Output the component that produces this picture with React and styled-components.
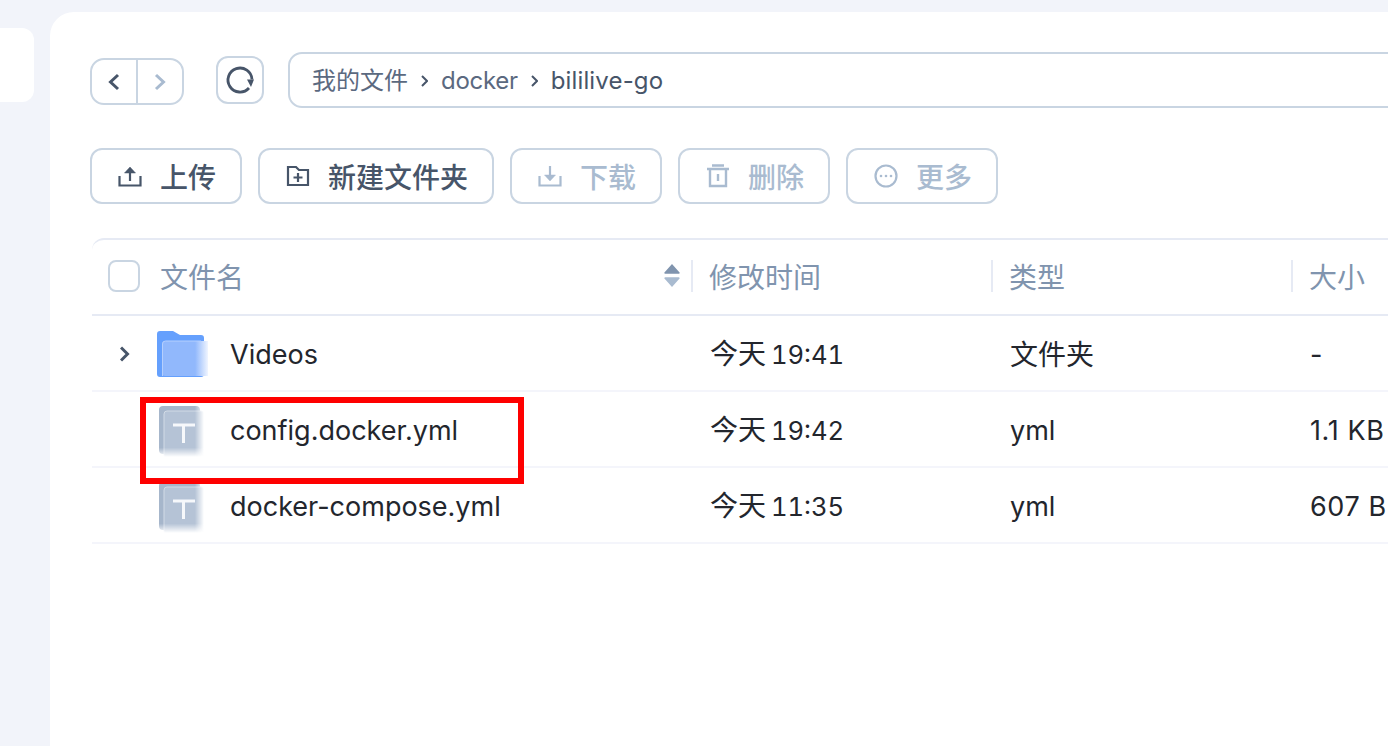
import styled, { createGlobalStyle } from "styled-components"

const GlobalStyle = createGlobalStyle`
	html, body {
		margin: 0;
		height: 100%;
		overflow: hidden;
		background: #f2f4fa;
	}
	* {
		box-sizing: border-box;
	}
`

const Page = styled.div`
	width: 1388px;
	height: 746px;
	overflow: hidden;
	position: relative;
	display: flex;
	align-items: flex-start;
	gap: 16px;
	padding-top: 12px;
	font-family: Inter, "Noto Sans CJK SC", sans-serif;
`

const SideCard = styled.div`
	width: 34px;
	height: 74px;
	margin-top: 16px;
	flex: none;
	background: #fff;
	border-radius: 0 12px 12px 0;
`

const Panel = styled.main`
	flex: none;
	width: 1500px;
	height: 760px;
	background: #fff;
	border-radius: 24px 0 0 0;
	padding: 40px 0 0 40px;
`

const TopBar = styled.div`
	display: flex;
	align-items: flex-start;
	height: 56px;
`

const NavGroup = styled.div`
	display: flex;
	width: 94px;
	height: 47px;
	margin-top: 6px;
	border: 2px solid #c9d5e2;
	border-radius: 14px;
`

const NavBtn = styled.div`
	flex: 1;
	display: flex;
	align-items: center;
	justify-content: center;
	color: ${(props) => (props.$off ? "#a9bbd0" : "#475569")};
	& + & {
		border-left: 2px solid #c9d5e2;
	}
`

const RefreshBtn = styled.div`
	width: 48px;
	height: 48px;
	margin: 4px 24px 0 32px;
	border: 2px solid #c9d5e2;
	border-radius: 12px;
	display: flex;
	align-items: center;
	justify-content: center;
	color: #475569;
`

const PathBar = styled.div`
	flex: none;
	width: 1200px;
	height: 56px;
	border: 2px solid #c9d5e2;
	border-radius: 14px;
	display: flex;
	align-items: center;
	padding: 2px 0 0 22px;
	gap: 13px;
	font-size: 24px;
	line-height: 30px;
	color: #5b6980;
`

const Crumb = styled.span`
	color: ${(props) => (props.$current ? "#475569" : "#5b6980")};
	letter-spacing: ${(props) => props.$track || 0}px;
`

const Chevron = styled.svg`
	flex: none;
`

const Toolbar = styled.div`
	display: flex;
	gap: 16px;
	margin-top: 40px;
`

const ToolBtn = styled.div`
	height: 56px;
	width: ${(props) => props.$w}px;
	border: 2px solid #c9d5e2;
	border-radius: 12px;
	padding-left: 2px;
	display: flex;
	align-items: center;
	justify-content: center;
	gap: 18px;
	font-size: 28px;
	font-weight: 500;
	color: ${(props) => (props.$off ? "#a9bbd0" : "#475569")};
`

const Table = styled.div`
	margin: 34px 0 0 2px;
	width: 1400px;
	border-top: 2px solid #e6eaf4;
	border-radius: 12px 0 0 0;
`

const HeadRow = styled.div`
	display: grid;
	grid-template-columns: 599px 300px 300px 200px;
	height: 76px;
	padding-bottom: 3px;
	border-bottom: 2px solid #e6eaf4;
	align-items: center;
`

const HeadCell = styled.div`
	height: 32px;
	display: flex;
	align-items: center;
	font-size: 28px;
	line-height: 32px;
	color: #8094ae;
	padding-left: 16px;
	border-left: ${(props) => (props.$first ? "none" : "2px solid #e6eaf4")};
`

const NameHead = styled(HeadCell)`
	padding-left: 16px;
	gap: 20px;
`

const HeadLabel = styled.span`
	padding-top: 4px;
`

const Check = styled.div`
	width: 32px;
	height: 32px;
	border: 2px solid #c9d5e2;
	border-radius: 8px;
`

const SortMark = styled.svg`
	margin-left: auto;
	margin-right: 11px;
`

const Row = styled.div`
	display: grid;
	grid-template-columns: 599px 300px 300px 200px;
	height: 76px;
	padding-top: 2px;
	border-bottom: 2px solid #f4f5fb;
	align-items: center;
	font-size: 27px;
	line-height: 32px;
	color: #23262d;
`

const NameCell = styled.div`
	display: flex;
	align-items: center;
	padding-left: 28px;
`

const Caret = styled.div`
	width: 18px;
	margin-right: 19px;
	flex: none;
	display: flex;
	color: #475569;
`

const IconBox = styled.div`
	width: 52px;
	flex: none;
	display: flex;
	padding-left: ${(props) => (props.$folder ? 0 : 2)}px;
	margin-top: ${(props) => (props.$folder ? 0 : 4)}px;
`

const FileName = styled.span`
	margin-left: 21px;
	padding-top: 2px;
`

const Cell = styled.div`
	padding: 2px 0 0 19px;
`

const TimeCell = styled(Cell)`
	padding-top: 0;
	font-size: 25.6px;
	font-variant-numeric: tabular-nums;
	word-spacing: -2px;
`

const SizeCell = styled(Cell)`
	letter-spacing: 0.6px;
`

const Han = styled.span`
	font-size: 28px;
`

const Highlight = styled.div`
	position: absolute;
	left: 140px;
	top: 397px;
	width: 384px;
	height: 87px;
	border: 6px solid #fe0000;
	pointer-events: none;
`

const Arrow = ({ dir }) => (
	<svg width="16" height="20" viewBox="0 0 16 20" fill="none" stroke="currentColor" strokeWidth="3">
		<path d={dir === "left" ? "M12 3 L4.500 10 L12 17" : "M4 3 L11.500 10 L4 17"} />
	</svg>
)

const PathChevron = () => (
	<Chevron width="7" height="12" viewBox="0 0 7 12" fill="none" stroke="#475569" strokeWidth="2">
		<path d="M1 1 6 6 1 11" />
	</Chevron>
)

const ReloadIcon = () => (
	<svg width="30" height="30" viewBox="0 0 30 30" fill="none">
		<path d="M24 23A12 12 0 1 1 27 14.500" stroke="currentColor" strokeWidth="2.800" />
		<path d="M22 14.500h7l-3 7.500z" fill="currentColor" />
	</svg>
)

const UploadIcon = () => (
	<svg width="24" height="24" viewBox="0 0 24 24" fill="none" stroke="currentColor" strokeWidth="2.200">
		<path d="M1.500 12v9.500h21V12" />
		<path d="M12 17V5" />
		<path d="M6.500 9 12 3l5.500 6z" fill="currentColor" strokeWidth="0.500" />
	</svg>
)

const DownloadIcon = () => (
	<svg width="24" height="24" viewBox="0 0 24 24" fill="none" stroke="currentColor" strokeWidth="2.200">
		<path d="M1.500 12v9.500h21V12" />
		<path d="M12 2v11" />
		<path d="M6.500 11 12 17l5.500-6z" fill="currentColor" strokeWidth="0.500" />
	</svg>
)

const NewFolderIcon = () => (
	<svg width="24" height="24" viewBox="0 0 24 24" fill="none" stroke="currentColor" strokeWidth="2.200">
		<path d="M2 3h8l3 3h9v15H2z" />
		<path d="M12 9v9M7.500 13.500h9" />
	</svg>
)

const TrashIcon = () => (
	<svg width="24" height="24" viewBox="0 0 24 24" fill="none" stroke="currentColor" strokeWidth="2.400">
		<path d="M1 5h22M6 1.500h12M4 5v17h16V5" />
		<path d="M12 10v7" />
	</svg>
)

const MoreIcon = () => (
	<svg width="24" height="24" viewBox="0 0 24 24" fill="none">
		<circle cx="12" cy="12" r="10.500" stroke="currentColor" strokeWidth="2.200" />
		<circle cx="7" cy="12" r="1.300" fill="currentColor" />
		<circle cx="12" cy="12" r="1.300" fill="currentColor" />
		<circle cx="17" cy="12" r="1.300" fill="currentColor" />
	</svg>
)

const FolderIcon = () => (
	<svg width="52" height="46" viewBox="0 0 52 46">
		<defs>
			<linearGradient id="folderFront" x1="0" x2="1" y1="0" y2="0">
				<stop offset="0.72" stopColor="#91b8fc" />
				<stop offset="1" stopColor="#f0f5ff" />
			</linearGradient>
		</defs>
		<path d="M0 3a3 3 0 0 1 3-3h13l7 4h21a3 3 0 0 1 3 3v36a3 3 0 0 1-3 3H3a3 3 0 0 1-3-3z" fill="#65a0fd" />
		<path d="M5 13a3 3 0 0 1 3-3h43v35H8a3 3 0 0 1-3-3z" fill="url(#folderFront)" />
		<path d="M5.500 45V13a3 3 0 0 1 3-3H44" fill="none" stroke="#b5cffd" strokeWidth="1" />
	</svg>
)

const TextFileIcon = ({ id }) => (
	<svg width="46" height="52" viewBox="0 0 46 52">
		<defs>
			<linearGradient id={`${id}h`} x1="0" x2="1" y1="0" y2="0">
				<stop offset="0.78" stopColor="#fff" />
				<stop offset="0.98" stopColor="#000" />
			</linearGradient>
			<linearGradient id={`${id}v`} x1="0" x2="0" y1="0" y2="1">
				<stop offset="0.8" stopColor="#fff" />
				<stop offset="0.98" stopColor="#000" />
			</linearGradient>
			<mask id={`${id}mh`} maskUnits="userSpaceOnUse" x="0" y="0" width="46" height="52">
				<rect width="46" height="52" fill={`url(#${id}h)`} />
			</mask>
			<mask id={`${id}mv`} maskUnits="userSpaceOnUse" x="0" y="0" width="46" height="52">
				<rect width="46" height="52" fill={`url(#${id}v)`} />
			</mask>
		</defs>
		<g mask={`url(#${id}mv)`}>
			<g mask={`url(#${id}mh)`}>
				<rect width="41" height="48" rx="4" fill="#a6b6cb" />
				<rect x="5" y="5" width="40" height="47" rx="3" fill="#b5c3d6" stroke="#d2dbe6" strokeWidth="1" />
			</g>
		</g>
		<path d="M14 19h22M24.500 19v18" stroke="#f6f8fb" strokeWidth="3" fill="none" />
	</svg>
)

const files = [
	{ name: "Videos", day: "今天", time: "19:41", type: "文件夹", size: "-", folder: true },
	{ name: "config.docker.yml", day: "今天", time: "19:42", type: "yml", size: "1.1 KB" },
	{ name: "docker-compose.yml", day: "今天", time: "11:35", type: "yml", size: "607 B" },
]

export default function App() {
	return (
		<Page>
			<GlobalStyle />
			<SideCard />
			<Panel>
				<TopBar>
					<NavGroup>
						<NavBtn><Arrow dir="left" /></NavBtn>
						<NavBtn $off><Arrow dir="right" /></NavBtn>
					</NavGroup>
					<RefreshBtn><ReloadIcon /></RefreshBtn>
					<PathBar>
						<Crumb>我的文件</Crumb>
						<PathChevron />
						<Crumb $track={-0.3}>docker</Crumb>
						<PathChevron />
						<Crumb $current $track={0.15}>bililive-go</Crumb>
					</PathBar>
				</TopBar>
				<Toolbar>
					<ToolBtn $w={152}><UploadIcon />上传</ToolBtn>
					<ToolBtn $w={236}><NewFolderIcon />新建文件夹</ToolBtn>
					<ToolBtn $w={152} $off><DownloadIcon />下载</ToolBtn>
					<ToolBtn $w={152} $off><TrashIcon />删除</ToolBtn>
					<ToolBtn $w={152} $off><MoreIcon />更多</ToolBtn>
				</Toolbar>
				<Table>
					<HeadRow>
						<NameHead $first>
							<Check />
							<HeadLabel>文件名</HeadLabel>
							<SortMark width="16" height="27" viewBox="0 0 18 28">
								<path d="M9 1 17 10a1 1 0 0 1-1 2H2a1 1 0 0 1-1-2z" fill="#8094ae" />
								<path d="M2 16h14a1 1 0 0 1 1 2L9 27 1 18a1 1 0 0 1 1-2z" fill="#a9bbd0" />
							</SortMark>
						</NameHead>
						<HeadCell><HeadLabel>修改时间</HeadLabel></HeadCell>
						<HeadCell><HeadLabel>类型</HeadLabel></HeadCell>
						<HeadCell><HeadLabel>大小</HeadLabel></HeadCell>
					</HeadRow>
					{files.map((f, i) => (
						<Row key={f.name}>
							<NameCell>
								<Caret>
									{f.folder && (
										<svg width="16" height="20" viewBox="0 0 16 20" fill="none" stroke="currentColor" strokeWidth="3">
											<path d="M1 3.500 7.500 10 1 16.500" />
										</svg>
									)}
								</Caret>
								<IconBox $folder={f.folder}>
									{f.folder ? <FolderIcon /> : <TextFileIcon id={`txt${i}`} />}
								</IconBox>
								<FileName>{f.name}</FileName>
							</NameCell>
							<TimeCell><Han>{f.day}</Han> {f.time}</TimeCell>
							<Cell>{f.folder ? <Han>{f.type}</Han> : f.type}</Cell>
							<SizeCell>{f.size}</SizeCell>
						</Row>
					))}
				</Table>
			</Panel>
			<Highlight />
		</Page>
	)
}
